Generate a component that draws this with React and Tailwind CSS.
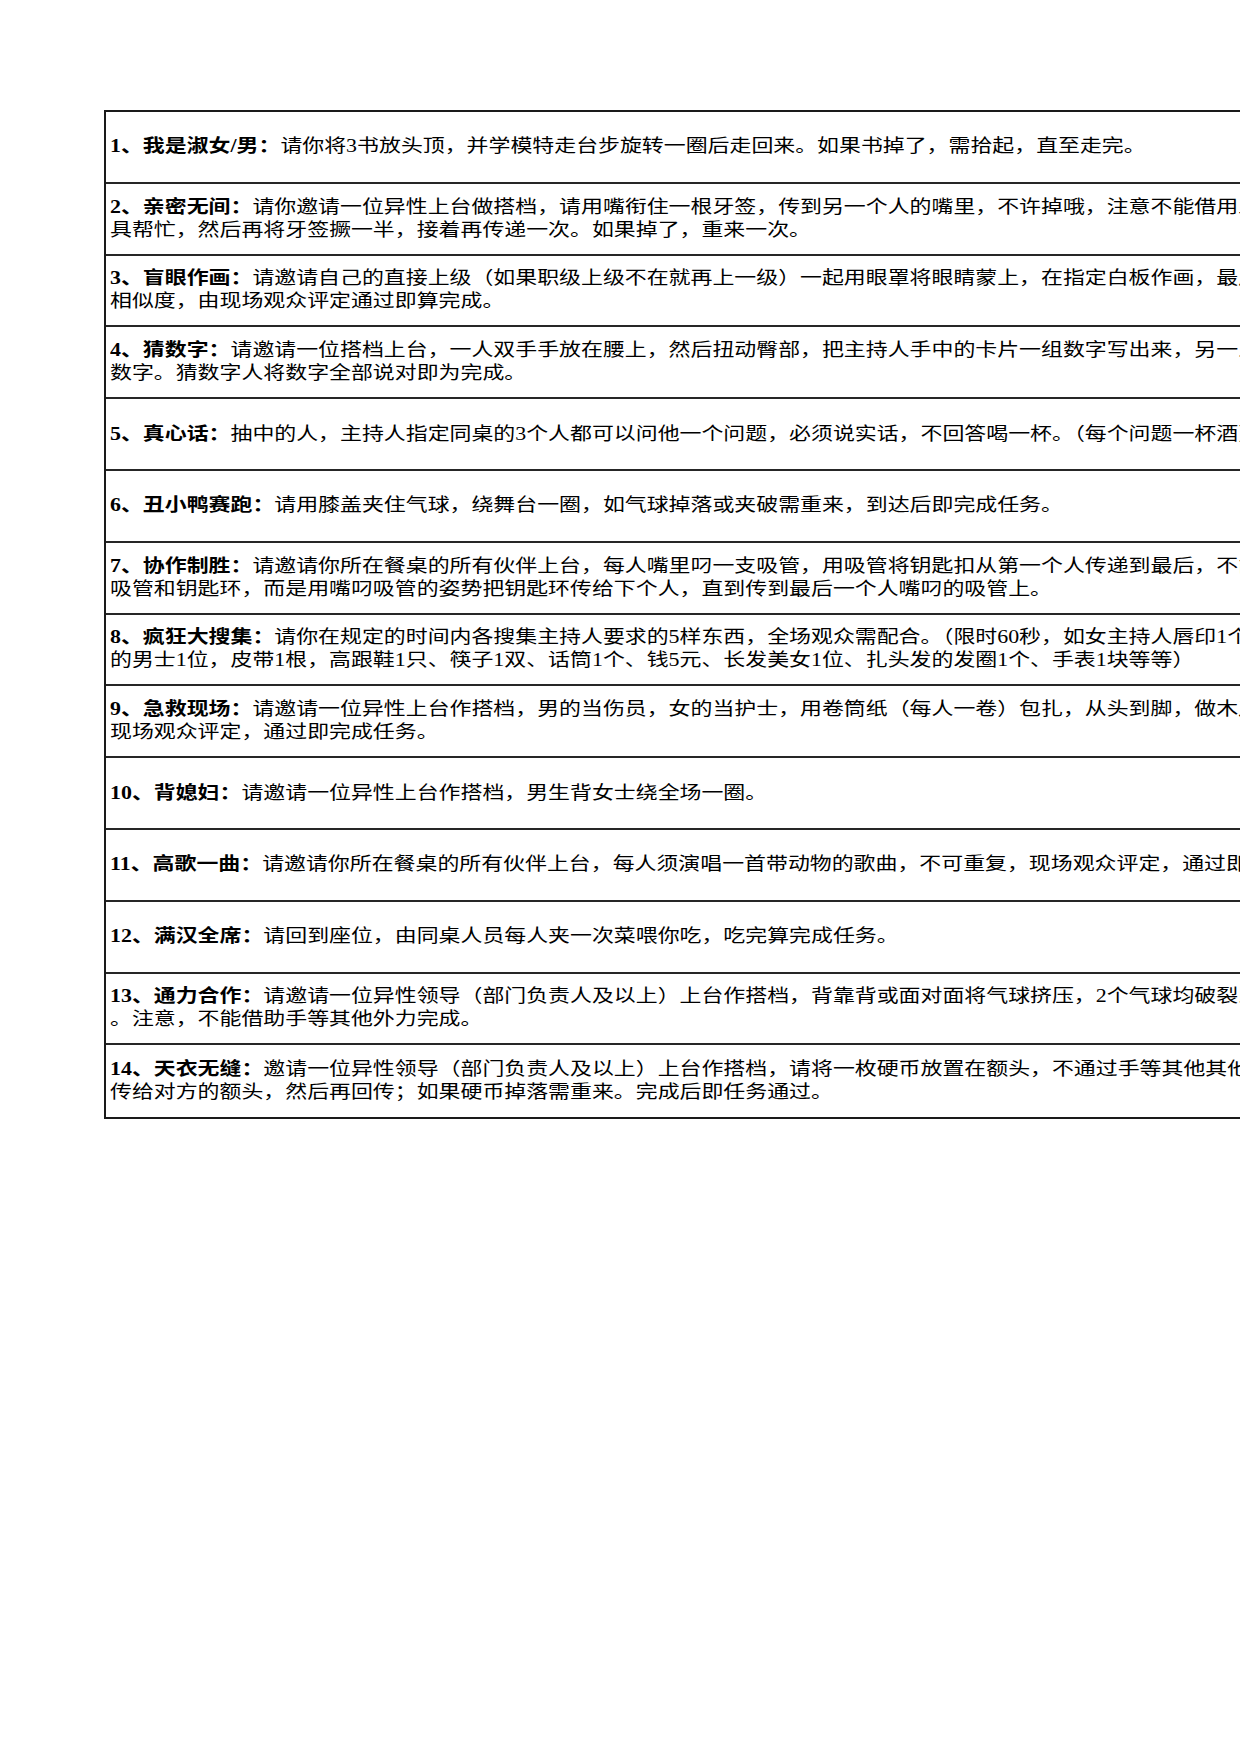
import React from "react";

// 游戏任务清单（表格右侧被页面截断）
const tasks = [
  {
    label: "1、我是淑女/男：",
    lines: ["请你将3书放头顶，并学模特走台步旋转一圈后走回来。如果书掉了，需拾起，直至走完。"],
  },
  {
    label: "2、亲密无间：",
    lines: [
      "请你邀请一位异性上台做搭档，请用嘴衔住一根牙签，传到另一个人的嘴里，不许掉哦，注意不能借用工",
      "具帮忙，然后再将牙签撅一半，接着再传递一次。如果掉了，重来一次。",
    ],
  },
  {
    label: "3、盲眼作画：",
    lines: [
      "请邀请自己的直接上级（如果职级上级不在就再上一级）一起用眼罩将眼睛蒙上，在指定白板作画，最后比较",
      "相似度，由现场观众评定通过即算完成。",
    ],
  },
  {
    label: "4、猜数字：",
    lines: [
      "请邀请一位搭档上台，一人双手手放在腰上，然后扭动臀部，把主持人手中的卡片一组数字写出来，另一人猜",
      "数字。猜数字人将数字全部说对即为完成。",
    ],
  },
  {
    label: "5、真心话：",
    lines: ["抽中的人，主持人指定同桌的3个人都可以问他一个问题，必须说实话，不回答喝一杯。（每个问题一杯酒）"],
  },
  {
    label: "6、丑小鸭赛跑：",
    lines: ["请用膝盖夹住气球，绕舞台一圈，如气球掉落或夹破需重来，到达后即完成任务。"],
  },
  {
    label: "7、协作制胜：",
    lines: [
      "请邀请你所在餐桌的所有伙伴上台，每人嘴里叼一支吸管，用吸管将钥匙扣从第一个人传递到最后，不能用手碰",
      "吸管和钥匙环，而是用嘴叼吸管的姿势把钥匙环传给下个人，直到传到最后一个人嘴叼的吸管上。",
    ],
  },
  {
    label: "8、疯狂大搜集：",
    lines: [
      "请你在规定的时间内各搜集主持人要求的5样东西，全场观众需配合。（限时60秒，如女主持人唇印1个",
      "的男士1位，皮带1根，高跟鞋1只、筷子1双、话筒1个、钱5元、长发美女1位、扎头发的发圈1个、手表1块等等）",
    ],
  },
  {
    label: "9、急救现场：",
    lines: [
      "请邀请一位异性上台作搭档，男的当伤员，女的当护士，用卷筒纸（每人一卷）包扎，从头到脚，做木乃伊",
      "现场观众评定，通过即完成任务。",
    ],
  },
  {
    label: "10、背媳妇：",
    lines: ["请邀请一位异性上台作搭档，男生背女士绕全场一圈。"],
  },
  {
    label: "11、高歌一曲：",
    lines: ["请邀请你所在餐桌的所有伙伴上台，每人须演唱一首带动物的歌曲，不可重复，现场观众评定，通过即完成任务。"],
  },
  {
    label: "12、满汉全席：",
    lines: ["请回到座位，由同桌人员每人夹一次菜喂你吃，吃完算完成任务。"],
  },
  {
    label: "13、通力合作：",
    lines: [
      "请邀请一位异性领导（部门负责人及以上）上台作搭档，背靠背或面对面将气球挤压，2个气球均破裂即可",
      "。注意，不能借助手等其他外力完成。",
    ],
  },
  {
    label: "14、天衣无缝：",
    lines: [
      "邀请一位异性领导（部门负责人及以上）上台作搭档，请将一枚硬币放置在额头，不通过手等其他其他方式",
      "传给对方的额头，然后再回传；如果硬币掉落需重来。完成后即任务通过。",
    ],
  },
];

export default function App() {
  return (
    <div className="w-[1240px] h-[1754px] overflow-hidden bg-white pt-[110px] pl-[104px] text-black font-['Liberation_Serif','Noto_Sans_CJK_SC',serif]">
      <div className="w-[1400px] border-2 border-r-0 border-[#1a1a1a]">
        {tasks.map((t, i) => (
          <div
            key={i}
            className={
              "h-[71.8px] flex flex-col justify-center pl-[4px] text-[18px] leading-[23px] " +
              (i < tasks.length - 1 ? "border-b-2 border-[#262626]" : "")
            }
          >
            <div className="whitespace-nowrap origin-left scale-x-[1.217]">
              <span className="font-bold">{t.label}</span>
              {t.lines[0]}
            </div>
            {t.lines[1] && (
              <div className="whitespace-nowrap origin-left scale-x-[1.217]">{t.lines[1]}</div>
            )}
          </div>
        ))}
      </div>
    </div>
  );
}
